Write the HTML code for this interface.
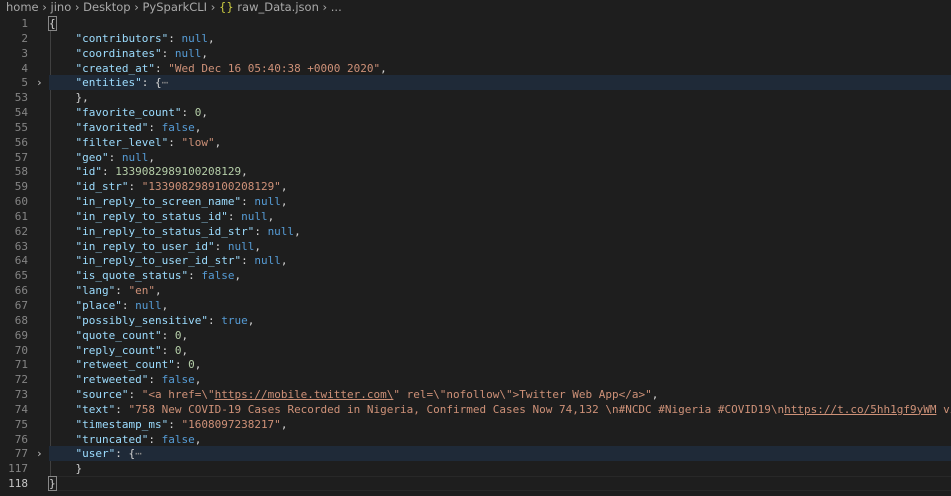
<!DOCTYPE html><html><head><style>
body{margin:0;background:#1e1e1e;width:951px;height:496px;overflow:hidden;position:relative}
.bc{position:absolute;top:0;left:6px;height:16px;line-height:16px;font:11.5px "DejaVu Sans","Liberation Sans",sans-serif;color:#a9a9a9;white-space:pre}
.bc b{font-weight:normal;color:#cbcb41}
.ed{position:absolute;top:0;left:0;right:0;bottom:0;font:11px "DejaVu Sans Mono","Liberation Mono",monospace}
.r{position:absolute;left:0;right:0;height:15px;line-height:15px;white-space:pre}
.n{position:absolute;left:0;width:28px;text-align:right;color:#858585}
.f{position:absolute;left:36px;color:#c5c5c5}
.c{position:absolute;left:49px;color:#d4d4d4}
.hl{position:absolute;left:49px;right:0;top:0;bottom:0;background:#1f2a38}
.cur{position:absolute;left:49px;right:0;top:0;bottom:0;border-top:1px solid #282828;border-bottom:1px solid #282828}
.k{color:#9cdcfe}.s{color:#ce9178}.b{color:#569cd6}.m{color:#b5cea8}.u{text-decoration:underline}
.g{position:absolute;left:50px;top:31px;height:445px;border-left:1px solid #404040}
</style></head><body>
<div class="bc">home › jino › Desktop › PySparkCLI › <b>{}</b> raw_Data.json › ...</div>
<div class="ed">
<div class="g"></div>
<div class="r" style="top:16px"><span class="n">1</span><span class="c"><span style="outline:1px solid #888">{</span></span></div>
<div class="r" style="top:30.8px"><span class="n">2</span><span class="c">    <span class="k">"contributors"</span>: <span class="b">null</span>,</span></div>
<div class="r" style="top:45.7px"><span class="n">3</span><span class="c">    <span class="k">"coordinates"</span>: <span class="b">null</span>,</span></div>
<div class="r" style="top:60.5px"><span class="n">4</span><span class="c">    <span class="k">"created_at"</span>: <span class="s">"Wed Dec 16 05:40:38 +0000 2020"</span>,</span></div>
<div class="r" style="top:75.4px"><div class="hl"></div><span class="n">5</span><span class="f">›</span><span class="c">    <span class="k">"entities"</span>: {<span style="color:#888">⋯</span></span></div>
<div class="r" style="top:90.2px"><span class="n">53</span><span class="c">    },</span></div>
<div class="r" style="top:105px"><span class="n">54</span><span class="c">    <span class="k">"favorite_count"</span>: <span class="m">0</span>,</span></div>
<div class="r" style="top:119.9px"><span class="n">55</span><span class="c">    <span class="k">"favorited"</span>: <span class="b">false</span>,</span></div>
<div class="r" style="top:134.7px"><span class="n">56</span><span class="c">    <span class="k">"filter_level"</span>: <span class="s">"low"</span>,</span></div>
<div class="r" style="top:149.6px"><span class="n">57</span><span class="c">    <span class="k">"geo"</span>: <span class="b">null</span>,</span></div>
<div class="r" style="top:164.4px"><span class="n">58</span><span class="c">    <span class="k">"id"</span>: <span class="m">1339082989100208129</span>,</span></div>
<div class="r" style="top:179.2px"><span class="n">59</span><span class="c">    <span class="k">"id_str"</span>: <span class="s">"1339082989100208129"</span>,</span></div>
<div class="r" style="top:194.1px"><span class="n">60</span><span class="c">    <span class="k">"in_reply_to_screen_name"</span>: <span class="b">null</span>,</span></div>
<div class="r" style="top:208.9px"><span class="n">61</span><span class="c">    <span class="k">"in_reply_to_status_id"</span>: <span class="b">null</span>,</span></div>
<div class="r" style="top:223.8px"><span class="n">62</span><span class="c">    <span class="k">"in_reply_to_status_id_str"</span>: <span class="b">null</span>,</span></div>
<div class="r" style="top:238.6px"><span class="n">63</span><span class="c">    <span class="k">"in_reply_to_user_id"</span>: <span class="b">null</span>,</span></div>
<div class="r" style="top:253.4px"><span class="n">64</span><span class="c">    <span class="k">"in_reply_to_user_id_str"</span>: <span class="b">null</span>,</span></div>
<div class="r" style="top:268.3px"><span class="n">65</span><span class="c">    <span class="k">"is_quote_status"</span>: <span class="b">false</span>,</span></div>
<div class="r" style="top:283.1px"><span class="n">66</span><span class="c">    <span class="k">"lang"</span>: <span class="s">"en"</span>,</span></div>
<div class="r" style="top:298px"><span class="n">67</span><span class="c">    <span class="k">"place"</span>: <span class="b">null</span>,</span></div>
<div class="r" style="top:312.8px"><span class="n">68</span><span class="c">    <span class="k">"possibly_sensitive"</span>: <span class="b">true</span>,</span></div>
<div class="r" style="top:327.6px"><span class="n">69</span><span class="c">    <span class="k">"quote_count"</span>: <span class="m">0</span>,</span></div>
<div class="r" style="top:342.5px"><span class="n">70</span><span class="c">    <span class="k">"reply_count"</span>: <span class="m">0</span>,</span></div>
<div class="r" style="top:357.3px"><span class="n">71</span><span class="c">    <span class="k">"retweet_count"</span>: <span class="m">0</span>,</span></div>
<div class="r" style="top:372.2px"><span class="n">72</span><span class="c">    <span class="k">"retweeted"</span>: <span class="b">false</span>,</span></div>
<div class="r" style="top:387px"><span class="n">73</span><span class="c">    <span class="k">"source"</span>: <span class="s">"&lt;a href=\"<span class="u">https://mobile.twitter.com\</span>" rel=\"nofollow\"&gt;Twitter Web App&lt;/a&gt;"</span>,</span></div>
<div class="r" style="top:401.8px"><span class="n">74</span><span class="c">    <span class="k">"text"</span>: <span class="s">"758 New COVID-19 Cases Recorded in Nigeria, Confirmed Cases Now 74,132 \n#NCDC #Nigeria #COVID19\n<span class="u">https://t.co/5hh1gf9yWM</span> via</span></span></div>
<div class="r" style="top:416.7px"><span class="n">75</span><span class="c">    <span class="k">"timestamp_ms"</span>: <span class="s">"1608097238217"</span>,</span></div>
<div class="r" style="top:431.5px"><span class="n">76</span><span class="c">    <span class="k">"truncated"</span>: <span class="b">false</span>,</span></div>
<div class="r" style="top:446.4px"><div class="hl"></div><span class="n">77</span><span class="f">›</span><span class="c">    <span class="k">"user"</span>: {<span style="color:#888">⋯</span></span></div>
<div class="r" style="top:461.2px"><span class="n">117</span><span class="c">    }</span></div>
<div class="r" style="top:476px"><div class="cur"></div><span class="n" style="color:#c6c6c6">118</span><span class="c"><span style="outline:1px solid #888">}</span></span></div>
</div>
</body></html>
